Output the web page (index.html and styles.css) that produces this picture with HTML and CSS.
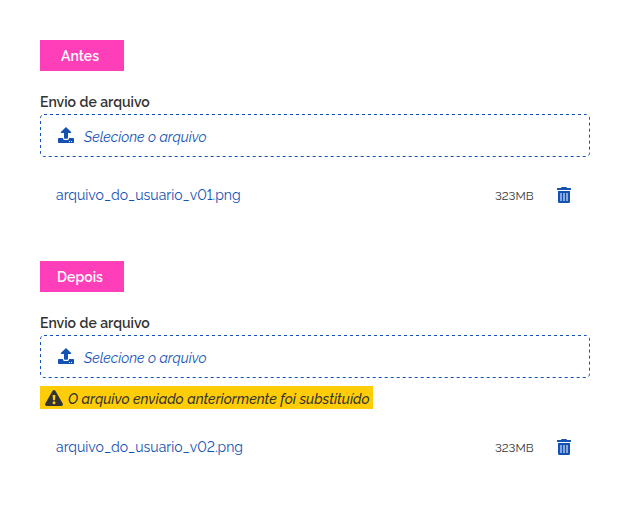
FILE: index.html
```html
<!DOCTYPE html>
<html lang="pt-BR">
<head>
<meta charset="utf-8">
<title>Envio de arquivo</title>
<link rel="stylesheet" href="styles.css">
</head>
<body>
<svg class="defs" aria-hidden="true">
  <symbol id="upload" viewBox="0 0 16 16">
    <path d="M8 0 2.9 5.1Q2.6 6 3.5 6H6v5q0 .8.8.8h2.4q.8 0 .8-.8V6h2.5q.9 0 .6-.9Z"/>
    <path fill-rule="evenodd" d="M.8 11H5v.6q0 1.4 1.4 1.4h3.2q1.4 0 1.4-1.4V11h4.2q.8 0 .8.8v3.4q0 .8-.8.8H.8q-.8 0-.8-.8v-3.4q0-.8.8-.8ZM11 14v1h1v-1ZM13 14v1h1v-1Z"/>
  </symbol>
  <symbol id="trash" viewBox="0 0 14 16">
    <path d="M.5 1H4l.4-.7Q4.6 0 5 0h4q.4 0 .6.3L10 1h3.500q.5 0 .5.5V3H0V1.500Q0 1 .5 1Z"/>
    <path d="M1 4h12v10.500q0 1.500-1.500 1.500h-9Q1 16 1 14.500Z"/>
    <path class="slats" d="M3 6h2v8H3ZM6 6h2v8H6ZM9 6h2v8H9Z"/>
  </symbol>
  <symbol id="warning" viewBox="0 0 18 16">
    <path fill-rule="evenodd" d="M7.600.8q1.400-1.600 2.800 0l7.300 12.800q.8 2-1.300 2.400H1.600q-2.100-.4-1.300-2.400ZM7.600 5l.4 5.300h2L10.400 5ZM9 11.200a1.500 1.500 0 1 0 0 3 1.500 1.500 0 0 0 0-3Z"/>
  </symbol>
</svg>
<main class="page">
  <section class="example">
    <h2 class="tag">Antes</h2>
    <label class="label">Envio de arquivo</label>
    <div class="upload">
      <svg class="outline"><rect x=".5" y=".5" width="549" height="42" rx="3.5"/></svg>
      <svg class="icon-upload"><use href="#upload"/></svg>
      <span class="placeholder">Selecione o arquivo</span>
    </div>
    <div class="file">
      <span class="name">arquivo_do_usuario_v01.png</span>
      <span class="size">323MB</span>
      <svg class="icon-trash"><use href="#trash"/></svg>
    </div>
  </section>
  <section class="example">
    <h2 class="tag">Depois</h2>
    <label class="label">Envio de arquivo</label>
    <div class="upload">
      <svg class="outline"><rect x=".5" y=".5" width="549" height="42" rx="3.5"/></svg>
      <svg class="icon-upload"><use href="#upload"/></svg>
      <span class="placeholder">Selecione o arquivo</span>
    </div>
    <div class="notice">
      <svg class="icon-warning"><use href="#warning"/></svg>
      <span class="message">O arquivo enviado anteriormente foi substituído</span>
    </div>
    <div class="file">
      <span class="name">arquivo_do_usuario_v02.png</span>
      <span class="size">323MB</span>
      <svg class="icon-trash"><use href="#trash"/></svg>
    </div>
  </section>
</main>
</body>
</html>
```

FILE: styles.css
```css
* { box-sizing: border-box; }
body {
  margin: 0;
  background: #fff;
  color: #333;
  font-family: Rawline, Raleway, Lato, "Open Sans", sans-serif;
  font-size: 14px;
  font-variant-numeric: lining-nums;
  line-height: 20px;
}
svg { display: block; flex: none; fill: #1351b4; }
.defs { position: absolute; width: 0; height: 0; }
.page {
  display: flex;
  flex-direction: column;
  gap: 56px;
  width: 630px;
  height: 511px;
  padding: 40px;
}
.example { display: flex; flex-direction: column; }
.tag {
  display: flex;
  align-items: center;
  justify-content: center;
  width: 84px;
  height: 31px;
  margin: 0;
  padding-top: 1px;
  padding-right: 4px;
  background: #ff3eb9;
  color: #fff;
  font-size: 14px;
  font-weight: 600;
}
.label {
  align-self: flex-start;
  height: 20px;
  margin-top: 21px;
  font-weight: 600;
  white-space: nowrap;
}
.upload {
  position: relative;
  display: flex;
  align-items: center;
  height: 43px;
  margin-top: 2px;
  padding: 2px 18px 0;
}
.outline { position: absolute; inset: 0; width: 550px; height: 43px; }
.outline rect { fill: none; stroke: #1351b4; stroke-dasharray: 3 3; }
.icon-upload { width: 16px; height: 16px; margin-top: -3px; }
.placeholder {
  margin-left: 10px;
  color: #1351b4;
  font-style: italic;
  white-space: nowrap;
}
.file {
  display: flex;
  align-items: center;
  height: 20px;
  margin-top: 28px;
  padding: 0 19px 0 16px;
}
.name { color: #1351b4; white-space: nowrap; }
.size {
  width: 40px;
  margin-left: auto;
  padding-top: 2px;
  color: #333;
  font-size: 11.7px;
  white-space: nowrap;
}
.icon-trash { width: 14px; height: 16px; margin-left: 22px; }
.slats { fill: #89a8da; }
.notice {
  display: flex;
  align-items: center;
  width: 333px;
  height: 23px;
  margin-top: 8px;
  padding-left: 5px;
  background: #ffcd07;
}
.icon-warning { width: 18px; height: 16px; fill: #333; }
.message {
  margin-left: 5px;
  padding-top: 2px;
  font-style: italic;
  font-weight: 500;
  white-space: nowrap;
}
```
